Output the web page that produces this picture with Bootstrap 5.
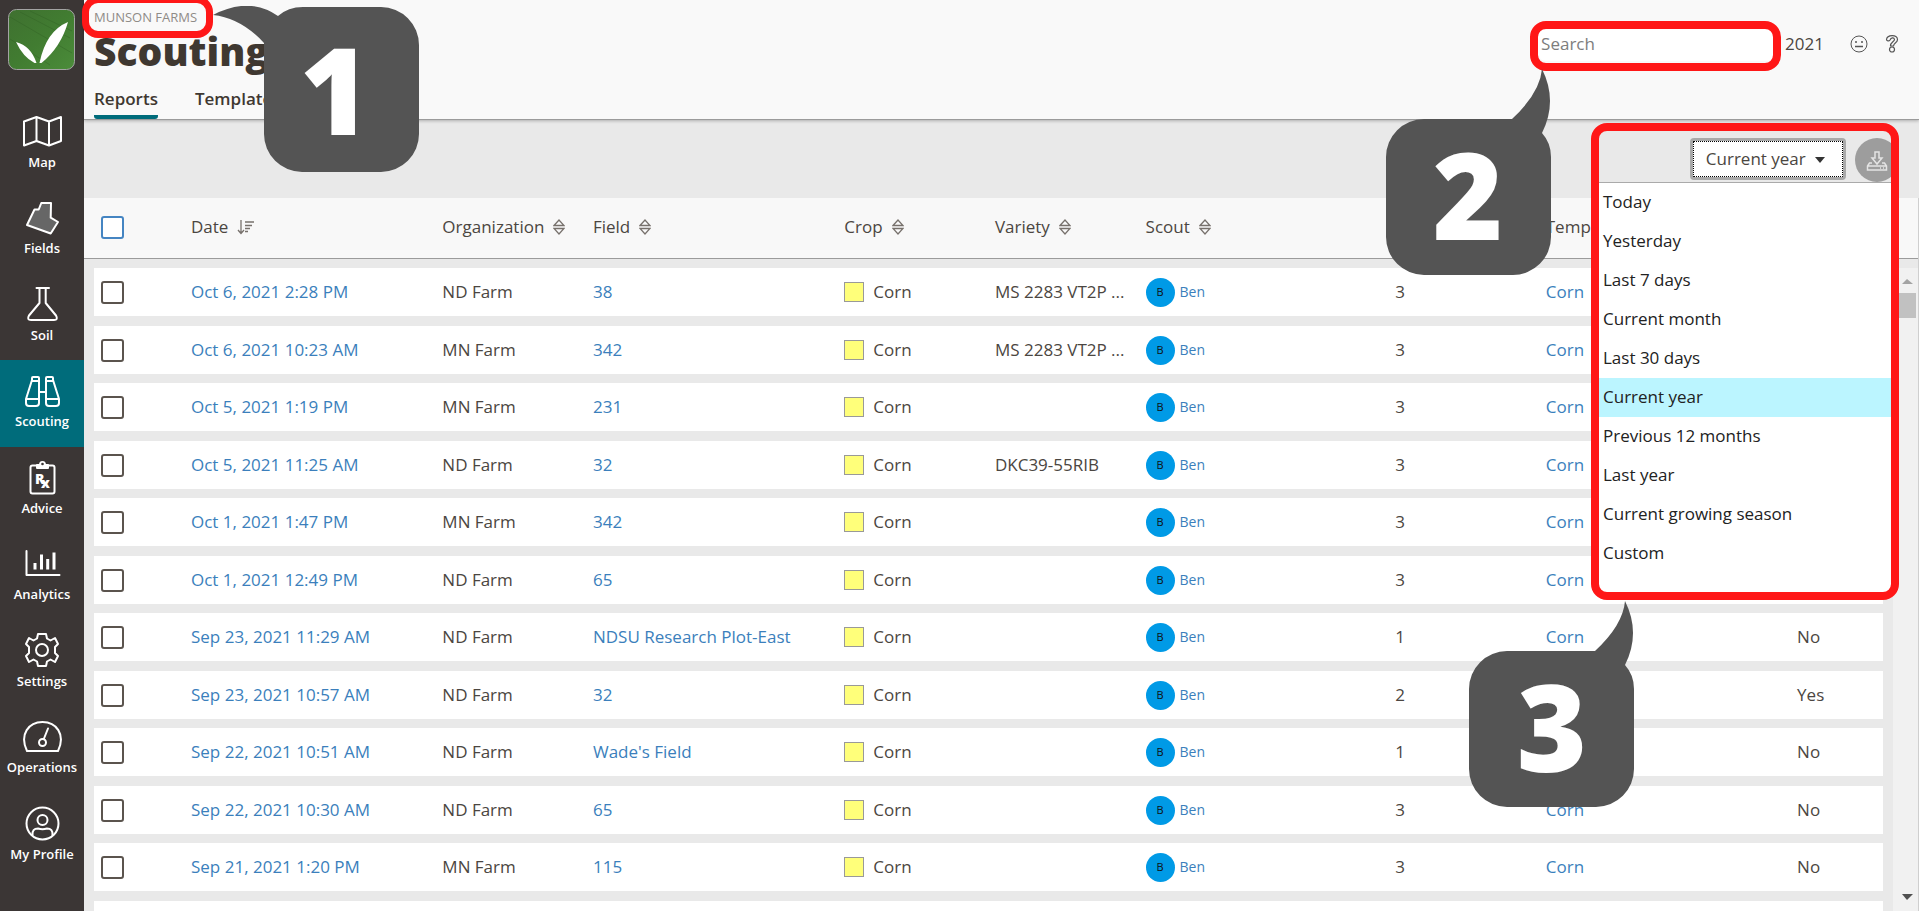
<!DOCTYPE html>
<html lang="en">
<head>
<meta charset="utf-8">
<meta name="viewport" content="width=device-width, initial-scale=1">
<title>Scouting</title>
<link href="https://cdn.jsdelivr.net/npm/bootstrap@5.3.0/dist/css/bootstrap.min.css" rel="stylesheet">
<style>
  body { font-family: "Open Sans", "Noto Sans", sans-serif; font-size: 17px; line-height: 24px; color: #4b4641; background: #e9e9e9; }
  a { color: #3b7fbc; text-decoration: none; }
  /* sidebar */
  .side { width: 84px; background: #3b3635; }
  .logo { height: 101px; padding: 9px 8px 0; }
  .side-item { height: 86px; padding-top: 12px; color: #fff; font-size: 13px; font-weight: 600; line-height: 24px; }
  .side-item:nth-child(even) { height: 87px; }
  .side-item.current { background: #006c7b; }
  .side-item svg { display: block; margin: 0 auto 1px; fill: none; stroke: #fff; stroke-width: 2; stroke-linejoin: round; stroke-linecap: round; }
  .side-item:hover { color: #fff; }
  /* page header */
  .top { height: 120px; background: #f9f9f9; border-bottom: 1px solid #9b9b9b; box-shadow: 0 1px 3px rgba(0,0,0,.25); padding: 7px 14px 0 10px; z-index: 1; }
  .org { font-size: 13px; line-height: 20px; color: #8f8b87; }
  h1 { font-size: 39px; line-height: 48px; font-weight: 800; color: #3f3831; margin: 0; }
  .tabs { gap: 37px; margin-top: 12px; }
  .tabs a { color: #3f3831; font-weight: 600; height: 32px; border-bottom: 4px solid transparent; }
  .tabs a.active { border-color: #006c7b; border-radius: 0 0 3px 3px; }
  .tools { margin-top: 16px; height: 41px; }
  .find { width: 237px; height: 34px; background: #fff; border: 0; border-radius: 8px; padding: 0 3px; margin-right: 10px; color: #4b4641; }
  .find::placeholder { color: #7d7d7d; }
  .year { margin-right: 25px; }
  .tool-btn { width: 20px; height: 24px; padding: 0; border: 0; background: none; line-height: 20px; }
  .tool-btn svg { display: block; }
  /* filter bar */
  .filter { height: 78px; padding: 18px 20px 0 0; }
  .range { width: 156px; height: 42px; background: #fff; border: 3px solid #a9a9a9; border-radius: 4px; outline: 1px dotted #000; outline-offset: -4px; color: #4b4641; padding: 0 4px 0 0; }
  .save { width: 44px; height: 44px; border: 0; background: #9d9d9d; margin-left: 9px; padding: 0; }
  .range-menu { top: 62px; right: 24px; width: 296px; height: 412px; background: #fff; border-top: 1px solid #aaa; z-index: 2; }
  .range-menu button { display: block; width: 100%; height: 39px; border: 0; background: none; text-align: left; padding: 0 0 2px 4px; color: #222; }
  .range-menu button.chosen { background: #bbf5ff; }
  /* report list */
  .list-area { background: linear-gradient(#f8f8f8 60px, #9b9b9b 60px, #9b9b9b 61px, #e9e9e9 61px); border-right: 1px solid #cfcfcf; }
  .sheet { padding: 0 10px; }
  .reports { table-layout: fixed; border-collapse: separate; border-spacing: 0; }
  .reports th { height: 70px; padding: 0 0 12px; font-weight: 400; white-space: nowrap; }
  .reports td { height: 58px; padding: 0; background: #fff; border-bottom: 10px solid #e9e9e9; white-space: nowrap; }
  .reports tr:nth-child(even) td { height: 57px; border-bottom-width: 9px; }
  .reports th:first-child, .reports td:first-child { padding-left: 7px; }
  .c-tick { width: 97px; }
  .c-wide { width: 14.05%; }
  .c-mid { width: 13.95%; }
  .c-slim { width: 8.42%; }
  .tick { appearance: none; display: block; width: 23px; height: 23px; margin: 0; background: #fff; border: 2px solid #5b544e; border-radius: 3px; }
  .tick-all { border-color: #4585c2; }
  .swatch { width: 20px; height: 20px; background: #ffff7a; border: 1px solid #999; margin-right: 9px; }
  .who { width: 29px; height: 29px; background: #009ae6; color: #111; font-size: 11px; margin-right: 5px; }
  .name { font-size: 14px; }
  .srt { margin: -2px 0 0 9px; vertical-align: middle; fill: none; stroke: #77716c; stroke-width: 1.3; }
  .bar { width: 25px; margin-top: 70px; background: #f1f1f1; padding: 10px 2px 10px 6px; }
  .bar i { display: block; width: 17px; height: 25px; background: #c1c1c1; margin-top: 8px; }
  /* annotations laid over the page */
  .ring { position: absolute; border: 8px solid #ff1717; border-radius: 16px; pointer-events: none; z-index: 5; }
  .ring-1 { left: 82px; top: -4px; width: 131px; height: 42px; border-width: 7px; }
  .ring-2 { right: 138px; top: 21px; width: 251px; height: 50px; }
  .ring-3 { right: 20px; top: 123px; width: 308px; height: 477px; }
  .note { position: absolute; z-index: 6; fill: #545454; font-weight: 800; font-size: 120px; pointer-events: none; }
  .note text { fill: #fff; text-anchor: middle; }
  .note-1 { left: 213px; top: 6px; }
  .note-2 { right: 368px; top: 69px; }
  .note-3 { right: 285px; top: 601px; }
</style>
</head>
<body>
<div class="d-flex vh-100 overflow-hidden position-relative">
  <aside class="side flex-shrink-0">
    <div class="logo">
      <svg width="67" height="61" viewBox="0 0 67 61" role="img" aria-label="Home">
        <defs><linearGradient id="g" x1="0" y1="0" x2="1" y2="1"><stop offset="0" stop-color="#3f7030"/><stop offset=".5" stop-color="#417c31"/><stop offset="1" stop-color="#4b8c3a"/></linearGradient></defs>
        <rect x=".5" y=".5" width="66" height="60" rx="8" fill="url(#g)" stroke="#a3a3a3"/>
        <path d="M12 3l50 26M22 2l42 20M2 8l62 36M2 30l40 26" stroke="#2f5f22" stroke-width="1" opacity=".4" fill="none"/>
        <path d="M8 33Q23 37 28.500 54H26.500Q15 48 8 33zM60 13Q53 38 33.500 54H31.500Q38 22 60 13z" fill="#fff"/>
      </svg>
    </div>
    <nav class="text-center">
      <a href="#" class="side-item d-block"><svg width="40" height="36"><path d="M2 8.500L14.500 4L27 8.500L39 4V28L27 32.500L14.500 28L2 32.500zM14.500 4V28M27 8.500V32.500"/></svg>Map</a>
      <a href="#" class="side-item d-block"><svg width="40" height="36"><path fill="#666" d="M19.300 4H29L28.700 18.700L36 23L28.700 34.500L5 26L12.500 10.500H16.700z"/></svg>Fields</a>
      <a href="#" class="side-item d-block"><svg width="40" height="36"><path d="M14.500 2H27M17.500 2V17L7 29.500Q4.500 34 9 34H32Q36.500 34 34 29.500L23.700 17V2"/></svg>Soil</a>
      <a href="#" class="side-item d-block current"><svg width="40" height="36"><path d="M10 8L4 27V31Q4 34 7 34H14Q17 34 17 31V8M31 8L37 27V31Q37 34 34 34H27Q24 34 24 31V8M10 9V6Q10 5 11 5H16Q17 5 17 6V9zM24 9V6Q24 5 25 5H30Q31 5 31 6V9zM4 27H17M24 27H37M17 20H24"/></svg>Scouting</a>
      <a href="#" class="side-item d-block"><svg width="40" height="36"><rect x="8.500" y="6.500" width="24" height="28" rx="2"/><path fill="#fff" d="M15 6h3a2.500 3 0 0 1 5 0h3v3H15z"/><circle cx="20.500" cy="5" r="1.300" fill="#3b3635" stroke="none"/><text x="13" y="25" fill="#fff" stroke="none" font-size="14" font-weight="800">R</text><text x="19" y="29" fill="#fff" stroke="none" font-size="14" font-weight="800">x</text></svg>Advice</a>
      <a href="#" class="side-item d-block"><svg width="40" height="36"><path d="M4.500 6V30H37.500"/><path stroke-width="3" stroke-linecap="butt" d="M13 24.500V18M19.500 24.500V9.500M25.700 24.500V14M32 24.500V7.500"/></svg>Analytics</a>
      <a href="#" class="side-item d-block"><svg width="40" height="36"><circle cx="20" cy="18" r="6"/><path d="M16 2H24L25 6.500L28.500 8.500L33 6L36 12L33 15V21L36 24L33 30L28.500 27.500L25 29.500L24 34H16L15 29.500L11.500 27.500L7 30L4 24L7 21V15L4 12L7 6L11.500 8.500L15 6.500z"/></svg>Settings</a>
      <a href="#" class="side-item d-block"><svg width="40" height="36"><path d="M5 33C-3 16 7 4 20.500 4S44 16 36 33z"/><circle cx="20.500" cy="24.500" r="3.500"/><path d="M21.800 21L26 10.500"/></svg>Operations</a>
      <a href="#" class="side-item d-block"><svg width="40" height="36"><circle cx="20.500" cy="18.500" r="16"/><circle cx="20.500" cy="15" r="5"/><path d="M10.500 30Q10 23.500 16 23.500Q20.500 25 25 23.500Q31 23.500 30.500 30"/></svg>My Profile</a>
    </nav>
  </aside>

  <main class="flex-grow-1 d-flex flex-column">
    <header class="top d-flex justify-content-between position-relative flex-shrink-0">
      <div>
        <div class="org">MUNSON FARMS</div>
        <h1>Scouting</h1>
        <nav class="tabs d-flex"><a href="#" class="active">Reports</a><a href="#">Templates</a></nav>
      </div>
      <div class="tools d-flex align-items-center">
        <input type="search" class="find" placeholder="Search" aria-label="Search">
        <span class="year">2021</span>
        <button class="tool-btn" aria-label="Feedback"><svg width="20" height="20" fill="none" stroke="#555"><circle cx="10" cy="10" r="8"/><path d="M6 12.500H14M7 7v2M13 7v2" stroke-width="1.500"/></svg></button>
        <button class="tool-btn ms-3" aria-label="Help"><svg width="14" height="20" fill="none" stroke="#555" stroke-width="1.200"><path d="M1.500 5.500C2 .5 12.500 0 12.500 5.500C12.500 9 9 8.500 8.500 12H5.500C5 8.500 9.500 7.500 9.500 5.500C9 3 6 3.500 5 6C4 7.500 1.500 7 1.500 5.500z"/><circle cx="7" cy="15.500" r="2.500"/></svg></button>
      </div>
    </header>

    <div class="filter d-flex justify-content-end position-relative flex-shrink-0">
      <button class="range" aria-expanded="true">Current year <svg class="ms-1" width="12" height="7"><path d="M1 0H11L6 6z" fill="#333"/></svg></button>
      <button class="save rounded-circle" aria-label="Download"><svg width="22" height="22" viewBox="0 0 22 22" fill="none" stroke="#e4e4e4" stroke-width="1.500"><path d="M9 2h4v6h3l-5 6-5-6h3zM6 13H3.500L1.500 16V20H20.500V16L18.500 13H16M1.500 16H20.500M14 18h1M17 18h1"/></svg></button>
      <div class="range-menu position-absolute">
        <button>Today</button><button>Yesterday</button><button>Last 7 days</button><button>Current month</button><button>Last 30 days</button><button class="chosen">Current year</button><button>Previous 12 months</button><button>Last year</button><button>Current growing season</button><button>Custom</button>
      </div>
    </div>

    <div class="list-area d-flex flex-grow-1 overflow-hidden">
      <div class="sheet flex-grow-1 overflow-hidden">
        <table class="reports w-100">
          <colgroup><col class="c-tick"><col class="c-wide"><col class="c-slim"><col class="c-wide"><col class="c-slim"><col class="c-slim"><col class="c-mid"><col class="c-slim"><col class="c-wide"><col></colgroup>
          <thead><tr id="head"></tr></thead>
          <tbody id="rows"></tbody>
        </table>
      </div>
      <div class="bar d-flex flex-column justify-content-between flex-shrink-0">
        <div><svg class="d-block" width="17" height="7"><path d="M3 6L8 1L14 6z" fill="#a3a3a3"/></svg><i></i></div>
        <svg class="d-block" width="17" height="7"><path d="M3 0H14L8 6z" fill="#505050"/></svg>
      </div>
    </div>
  </main>

  <div class="ring ring-1"></div>
  <div class="ring ring-2"></div>
  <div class="ring ring-3"></div>
  <svg class="note note-1" width="207" height="167"><path d="M0 9Q36 -10 65 10Q75 1 90 1H168A38 38 0 0 1 206 39V128A38 38 0 0 1 168 166H89A38 38 0 0 1 51 128V37Q28 12 0 9z"/><text x="122" y="129">1</text></svg>
  <svg class="note note-2" width="165" height="206"><path d="M156 0Q172 32 156 64Q165 74 165 88V168A38 38 0 0 1 127 206H38A38 38 0 0 1 0 168V88A38 38 0 0 1 38 50H126Q154 24 156 0z"/><text x="82" y="171">2</text></svg>
  <svg class="note note-3" width="165" height="206"><path d="M156 0Q172 32 156 64Q165 74 165 88V168A38 38 0 0 1 127 206H38A38 38 0 0 1 0 168V88A38 38 0 0 1 38 50H126Q154 24 156 0z"/><text x="83" y="171">3</text></svg>
</div>
<script src="https://cdn.jsdelivr.net/npm/bootstrap@5.3.0/dist/js/bootstrap.bundle.min.js"></script>
<script>
  const both = '<svg class="srt" width="12" height="16"><path d="M1 6.500L6 1L11 6.500zM1 9.500H11L6 15z"/></svg>';
  const down = '<svg class="srt" width="18" height="16"><path d="M4 1V14M1 11L4 14.500L7 11M8 3H17M8 6.500H15M8 9.500H13M8 12.500H11"/></svg>';
  document.getElementById('head').innerHTML =
    '<th><input type="checkbox" class="tick tick-all" aria-label="Select all"></th>' +
    ['Date', 'Organization', 'Field', 'Crop', 'Variety', 'Scout', '', 'Template', '']
      .map((t, i) => `<th>${t}${t ? (i ? both : down) : ''}</th>`).join('');
  const data = [
    ['Oct 6, 2021 2:28 PM', 'ND', '38', 'MS 2283 VT2P ...', 3, 'No'],
    ['Oct 6, 2021 10:23 AM', 'MN', '342', 'MS 2283 VT2P ...', 3, 'No'],
    ['Oct 5, 2021 1:19 PM', 'MN', '231', '', 3, 'No'],
    ['Oct 5, 2021 11:25 AM', 'ND', '32', 'DKC39-55RIB', 3, 'No'],
    ['Oct 1, 2021 1:47 PM', 'MN', '342', '', 3, 'No'],
    ['Oct 1, 2021 12:49 PM', 'ND', '65', '', 3, 'No'],
    ['Sep 23, 2021 11:29 AM', 'ND', 'NDSU Research Plot-East', '', 1, 'No'],
    ['Sep 23, 2021 10:57 AM', 'ND', '32', '', 2, 'Yes'],
    ['Sep 22, 2021 10:51 AM', 'ND', "Wade's Field", '', 1, 'No'],
    ['Sep 22, 2021 10:30 AM', 'ND', '65', '', 3, 'No'],
    ['Sep 21, 2021 1:20 PM', 'MN', '115', '', 3, 'No']
  ];
  document.getElementById('rows').innerHTML = data.map(r => `<tr>
    <td><input type="checkbox" class="tick" aria-label="Select ${r[0]}"></td>
    <td><a href="#">${r[0]}</a></td><td>${r[1]} Farm</td><td><a href="#">${r[2]}</a></td>
    <td><div class="d-flex align-items-center"><span class="swatch"></span>Corn</div></td>
    <td>${r[3]}</td>
    <td><div class="d-flex align-items-center"><span class="who rounded-circle d-flex align-items-center justify-content-center">B</span><a href="#" class="name">Ben</a></div></td>
    <td>${r[4]}</td><td><a href="#">Corn</a></td><td>${r[5]}</td></tr>`).join('') +
    '<tr><td colspan="10"></td></tr>';
</script>
</body>
</html>
